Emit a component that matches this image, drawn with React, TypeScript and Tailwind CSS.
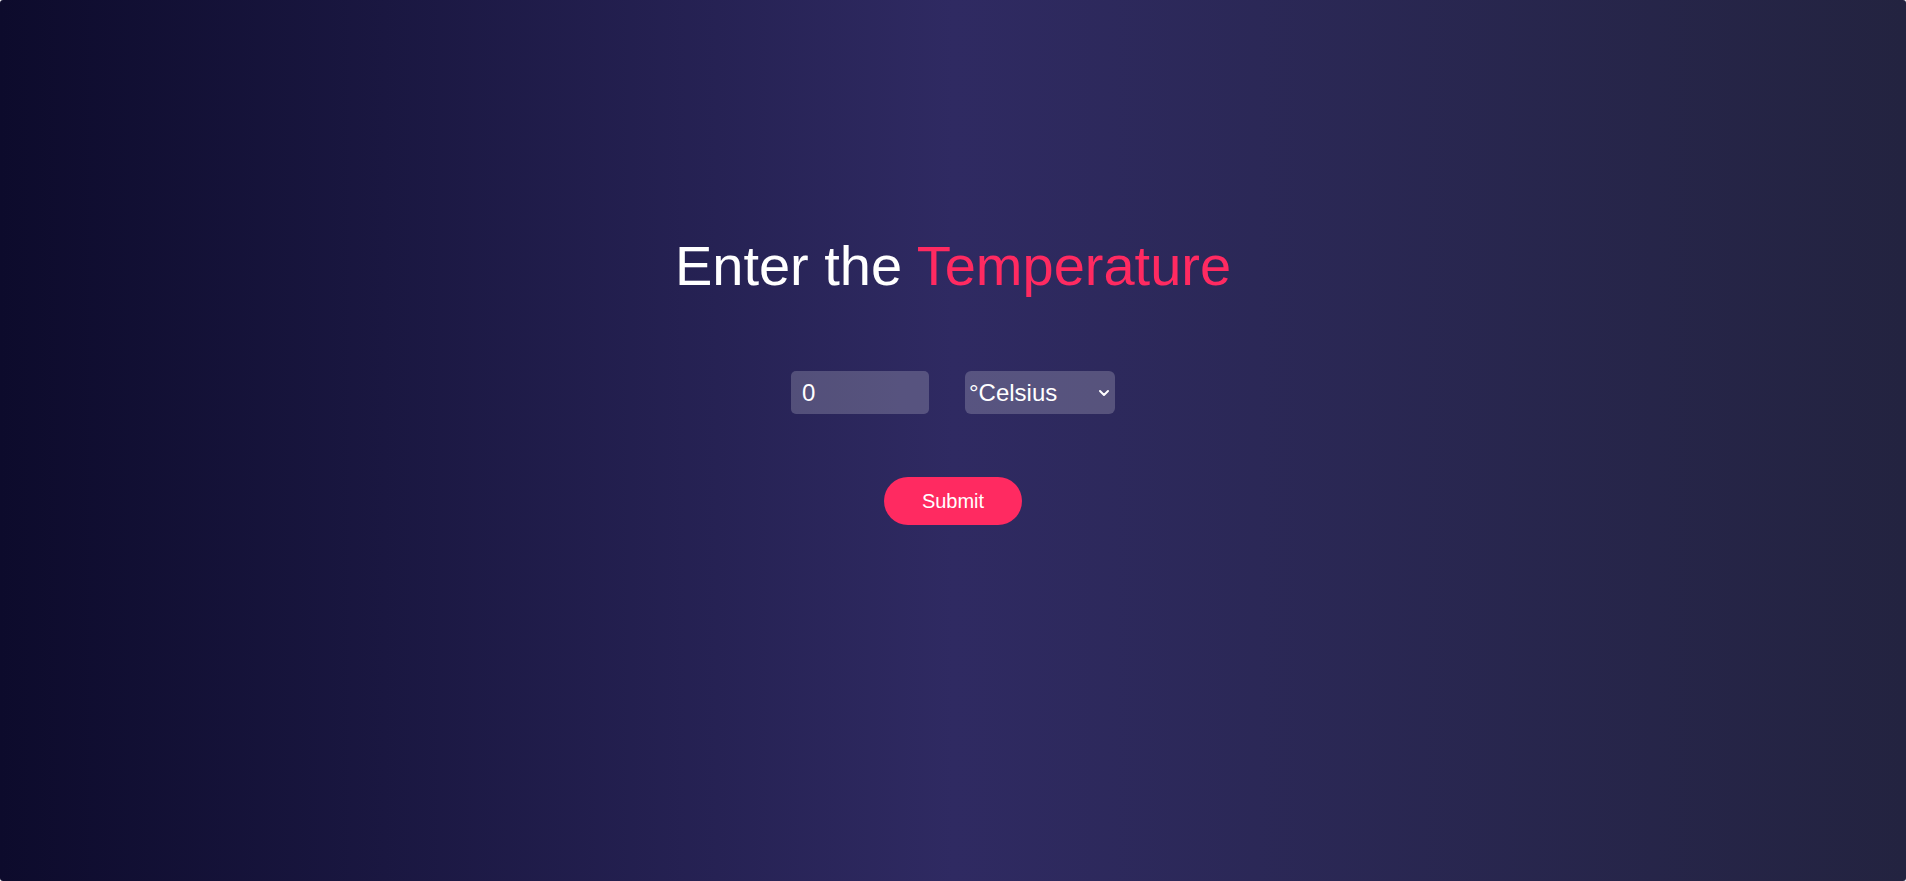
import { useState } from "react";

export default function App() {
  const [value, setValue] = useState("0");
  const [unit, setUnit] = useState("celsius");

  return (
    <div className="flex min-h-screen w-full flex-col items-center rounded-[3px] bg-linear-to-r from-[#0d0b2c] via-[#2f2a62] to-[#232340] font-['Liberation_Sans',Arial,sans-serif]">
      <h1 className="mt-[238px] text-[56px] leading-[56px] font-normal text-white">
        Enter the <span className="text-[#ff2a61]">Temperature</span>
      </h1>

      <form
        onSubmit={(event) => event.preventDefault()}
        className="flex flex-col items-center"
      >
        <div className="mt-[77px] flex items-center gap-[36px]">
          <input
            type="number"
            value={value}
            onChange={(event) => setValue(event.target.value)}
            className="h-[43px] w-[138px] rounded-[5px] bg-white/20 pl-[11px] text-[24px] text-white outline-none"
          />
          <div className="relative">
            <select
              value={unit}
              onChange={(event) => setUnit(event.target.value)}
              className="h-[43px] w-[150px] appearance-none rounded-[6px] bg-white/20 pl-[4px] text-[24px] text-white outline-none"
            >
              <option value="celsius" className="text-black">°Celsius</option>
              <option value="fahrenheit" className="text-black">°Fahrenheit</option>
              <option value="kelvin" className="text-black">Kelvin</option>
            </select>
            <svg
              viewBox="0 0 12 8"
              className="pointer-events-none absolute top-[18px] right-[5px] h-[8px] w-[12px]"
              fill="none"
              stroke="white"
              strokeWidth="2"
              strokeLinecap="round"
              strokeLinejoin="round"
            >
              <path d="M2 2l4 4 4-4" />
            </svg>
          </div>
        </div>

        <button
          type="submit"
          className="mt-[63px] h-[48px] w-[138px] rounded-full bg-[#ff2a61] text-[20px] text-white"
        >
          Submit
        </button>
      </form>
    </div>
  );
}
